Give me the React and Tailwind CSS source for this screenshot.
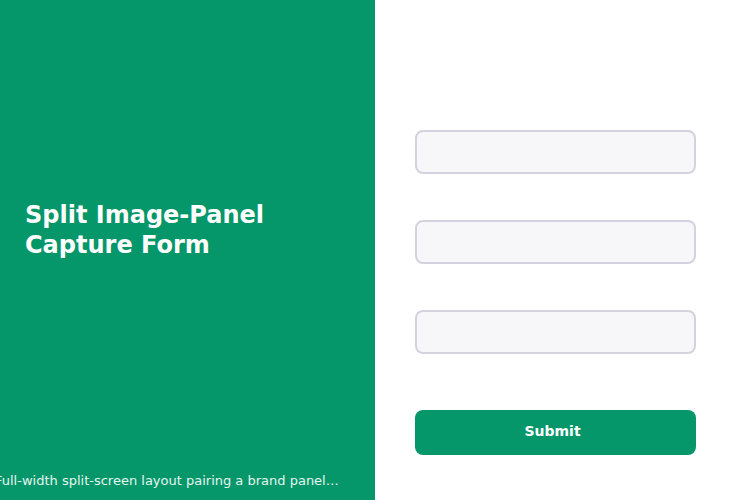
export default function App() {
  return (
    <div className="flex h-[500px] w-[750px] overflow-hidden" style={{ fontFamily: '"DejaVu Sans", sans-serif' }}>
      <div className="flex h-full w-[375px] flex-col overflow-hidden bg-[#059669]">
        <div className="flex flex-1 items-center px-[25px]">
          <h1 className="text-[24px] font-bold leading-[30px] text-white">
            Split Image-Panel
            <br />
            Capture Form
          </h1>
        </div>
        <div className="flex h-[40px] items-center pt-[2px]">
          <p className="ml-[-5px] whitespace-nowrap text-[13px] text-white/90">
            Full-width split-screen layout pairing a brand panel…
          </p>
        </div>
      </div>
      <div className="flex h-full flex-1 flex-col bg-white pl-10 pt-[130px]">
        <div className="flex w-[281px] flex-col">
          <div className="h-[44px] rounded-lg border-2 border-[#d4d2de] bg-[#f7f7f9]" />
          <div className="mt-[46px] h-[44px] rounded-lg border-2 border-[#d4d2de] bg-[#f7f7f9]" />
          <div className="mt-[46px] h-[44px] rounded-lg border-2 border-[#d4d2de] bg-[#f7f7f9]" />
          <button className="mt-[56px] flex h-[45px] items-center justify-center rounded-lg bg-[#059669] pb-[2px] pr-[6px] text-[14px] font-bold text-white">
            Submit
          </button>
        </div>
      </div>
    </div>
  );
}
